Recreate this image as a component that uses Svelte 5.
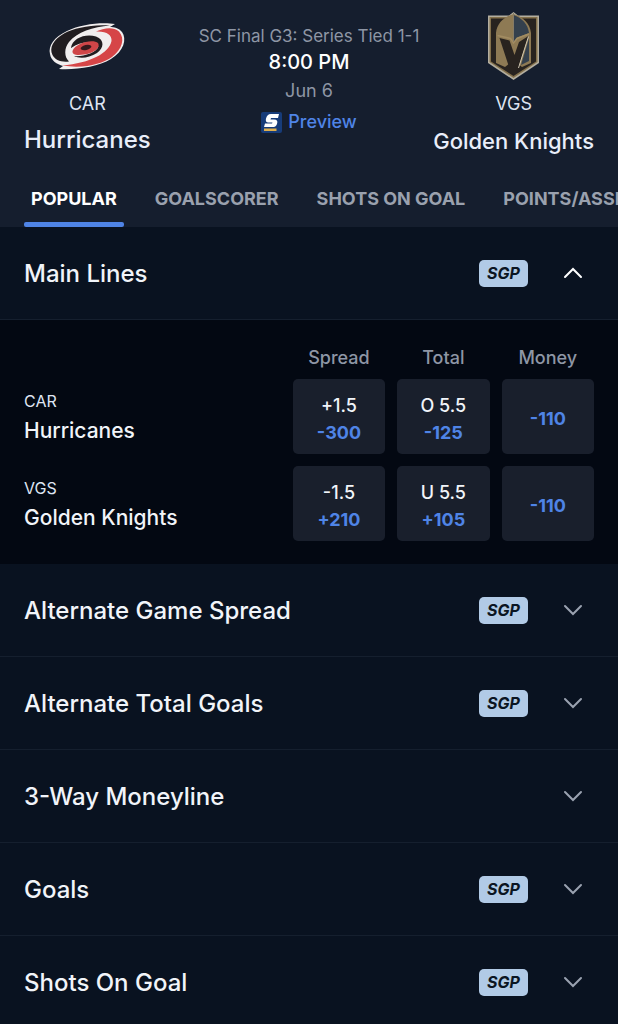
<script>
  const tabs = ['POPULAR', 'GOALSCORER', 'SHOTS ON GOAL', 'POINTS/ASSISTS'];
  let activeTab = $state('POPULAR');

  const lines = [
    {
      code: 'CAR',
      team: 'Hurricanes',
      odds: [
        { label: '+1.5', price: '-300' },
        { label: 'O 5.5', price: '-125' },
        { price: '-110' }
      ]
    },
    {
      code: 'VGS',
      team: 'Golden Knights',
      odds: [
        { label: '-1.5', price: '+210' },
        { label: 'U 5.5', price: '+105' },
        { price: '-110' }
      ]
    }
  ];

  let markets = $state([
    { name: 'Main Lines', sgp: true, open: true, lines: true },
    { name: 'Alternate Game Spread', sgp: true, open: false },
    { name: 'Alternate Total Goals', sgp: true, open: false },
    { name: '3-Way Moneyline', sgp: false, open: false },
    { name: 'Goals', sgp: true, open: false },
    { name: 'Shots On Goal', sgp: true, open: false }
  ]);
</script>

<header>
  <div class="matchup">
    <div class="team home">
      <svg class="logo" viewBox="0 0 84 72" aria-hidden="true">
        <g transform="translate(-45 -11)">
          <path d="M115 24C102 22 81 24 67 31C54 37 48 46 50 54C51 61 57 64 63 66L59 69C76 70 98 67 111 59C124 51 127 39 122 32C119 28 114 27 110 27Z" fill="#f1eeee" />
          <path d="M110 25.500C92 24 74 28 64 33.500C53 40 49 48 52.500 55C55 60 61 62.500 69 61.500C64 57 64 48 69 42C77 32 93 27 110 25.500Z" fill="#211d20" />
          <path d="M96 31.500C107 31 112 35 111.500 41C109 53 91 63 62 65.500C84 69 102 64 112 57C122 49 125.500 39 119 31.500C113 26.500 104 28 96 31.500Z" fill="#d64547" />
          <path d="M71 48C72 38 86 33 96 36.500C105 40 104 48 97 53C89 58 80 59 74 56C82 57 97 53 98.500 46C99 38 82 38 71 48Z" fill="#211d20" />
          <path d="M71 48C76 39 86 35 95 37C100 39 102 43 99 47C97 42 82 40 71 48Z" fill="#211d20" />
          <path d="M72.500 51C75 43 93 38.500 98 43C101 48 93 53.500 84 54.500C77 55.500 72 55 72.500 51Z" fill="#cf4547" />
          <ellipse cx="86" cy="47.500" rx="5.500" ry="2.500" transform="rotate(-13 86 47.500)" fill="#35191c" />
        </g>
      </svg>
      <span class="code">CAR</span>
      <strong>Hurricanes</strong>
    </div>

    <div class="details">
      <span class="series">SC Final G3: Series Tied 1-1</span>
      <time class="start">8:00 PM</time>
      <span class="date">Jun 6</span>
      <a class="preview" href="#preview">
        <svg viewBox="0 0 21 21" aria-hidden="true">
          <rect width="21" height="21" rx="2" fill="#173c79" />
          <path d="M18 2L17 6H10L9.500 7.500H13C16 7.500 17 9 16 12C15 14.500 14 15 11 15H3L4 11.500H11L11.500 10.500H8C5 10.500 4.500 9 5 6.500C6 3.500 7 2 10 2Z" fill="#fff" />
          <path d="M3 16.500H15.500V19H3Z" fill="#e0b04e" />
        </svg>
        Preview
      </a>
    </div>

    <div class="team away">
      <svg class="logo" viewBox="0 0 84 72" aria-hidden="true">
        <g transform="translate(-471 -11)">
          <path d="M487 15.500H508L512.500 12L517 15.500H538V63L512.500 80L487 63Z" fill="#b3ae9f" />
          <path d="M488.500 17H536.500V62L512.500 78L488.500 62Z" fill="#84714c" />
          <path d="M490 18.500H535V61.500L512.500 76L490 61.500Z" fill="#28231f" />
          <path d="M495 63V33C496 23 503 17 512.500 14C522 17 529 23 530 33V63L521 67L512.500 60L504 67Z" fill="#8e7a54" />
          <path d="M512.500 15C521 18 527 24 528 33L516 37.500L512.500 43Z" fill="#34404d" />
          <path d="M528 38V61L520 65Z" fill="#34404d" />
          <path d="M498.500 38L508.500 40.500L513.500 55L518 42L527.500 36L516.500 70H509Z" fill="#28231f" />
          <path d="M527.500 36.500L517.500 68" fill="none" stroke="#cfc6b1" />
          <path d="M496.500 35.500L509.500 38.500L512.500 43L516 38.500L528 34" fill="none" stroke="#a28c62" stroke-width="1.500" />
          <path d="M512.500 13V42" stroke="#857b66" />
        </g>
      </svg>
      <span class="code">VGS</span>
      <strong>Golden Knights</strong>
    </div>
  </div>

  <nav>
    {#each tabs as tab}
      <button class="tab" class:active={activeTab === tab} onclick={() => (activeTab = tab)}>{tab}</button>
    {/each}
  </nav>
</header>

<main>
  {#each markets as market}
    <section>
      <h2>
        <button class="market" aria-expanded={market.open} onclick={() => (market.open = !market.open)}>
          <span class="name">{market.name}</span>
          {#if market.sgp}<span class="sgp">SGP</span>{/if}
          <svg class="chevron" class:open={market.open} viewBox="0 0 20 12" aria-hidden="true">
            <path d="M2 2L10 10L18 2" />
          </svg>
        </button>
      </h2>
      {#if market.open && market.lines}
        <table>
          <thead>
            <tr>
              <td></td>
              <th scope="col">Spread</th>
              <th scope="col">Total</th>
              <th scope="col">Money</th>
            </tr>
          </thead>
          <tbody>
            {#each lines as line}
              <tr>
                <th scope="row">
                  <span class="short">{line.code}</span>
                  <span class="full">{line.team}</span>
                </th>
                {#each line.odds as odd}
                  <td>
                    <button class="odd">
                      {#if odd.label}<span>{odd.label}</span>{/if}
                      <b>{odd.price}</b>
                    </button>
                  </td>
                {/each}
              </tr>
            {/each}
          </tbody>
        </table>
      {/if}
    </section>
  {/each}
</main>

<style>
  :global(body) {
    margin: 0;
    background: #091220;
    color: #f1f4f9;
    font-family: Inter, "Liberation Sans", sans-serif;
    overflow-x: hidden;
  }

  button {
    margin: 0;
    padding: 0;
    border: 0;
    background: none;
    color: inherit;
    font: inherit;
    cursor: pointer;
  }

  header {
    background: #151e2e;
  }

  .matchup {
    display: grid;
    grid-template-columns: 1fr auto 1fr;
    padding: 11px 24px 0;
  }

  .team {
    display: flex;
    flex-direction: column;
    align-items: center;
    justify-self: start;
  }

  .team.away {
    justify-self: end;
  }

  .logo {
    width: 84px;
    height: 72px;
  }

  .code {
    margin-top: 9px;
    font-size: 18px;
    line-height: 24px;
    color: #dfe5f2;
  }

  .team strong {
    margin-top: 8px;
    font-size: 24px;
    line-height: 32px;
    font-weight: 500;
    color: #e9eefa;
  }

  .team.away strong {
    font-size: 22px;
    line-height: 34px;
  }

  .details {
    display: flex;
    flex-direction: column;
    align-items: center;
    padding-top: 13px;
  }

  .series {
    font-size: 17px;
    line-height: 24px;
    color: #8e96a5;
  }

  .start {
    font-size: 20px;
    line-height: 28px;
    font-weight: 500;
    color: #fff;
  }

  .date {
    font-size: 18px;
    line-height: 30px;
    color: #8e96a5;
  }

  .preview {
    display: flex;
    align-items: center;
    gap: 6px;
    font-size: 18px;
    line-height: 32px;
    font-weight: 500;
    color: #4f84e6;
    text-decoration: none;
  }

  .preview svg {
    width: 21px;
    height: 21px;
  }

  nav {
    display: flex;
    gap: 24px;
    margin-top: 13px;
    padding: 0 24px;
    overflow: hidden;
  }

  .tab {
    flex: none;
    padding: 16px 7px 11px;
    border-bottom: 5px solid transparent;
    font-size: 18px;
    line-height: 24px;
    font-weight: 700;
    color: #9aa1ae;
    position: relative;
  }

  .tab.active {
    color: #fff;
  }

  .tab.active::after {
    content: "";
    position: absolute;
    left: 0;
    right: 0;
    bottom: -5px;
    height: 5px;
    border-radius: 2px;
    background: #4f84e6;
  }

  h2 {
    margin: 0;
    font: inherit;
  }

  .market {
    display: flex;
    align-items: center;
    box-sizing: border-box;
    width: 100%;
    height: 93px;
    padding: 0 35px 0 24px;
    border-bottom: 1px solid #151f2e;
    text-align: left;
  }

  .name {
    flex: 1;
    padding-top: 2px;
    font-size: 24px;
    line-height: 32px;
    font-weight: 500;
  }

  .sgp {
    width: 49px;
    border-radius: 5px;
    background: #b1cae6;
    color: #0b1522;
    font-size: 16px;
    line-height: 27px;
    font-weight: 700;
    font-style: italic;
    text-align: center;
  }

  .chevron {
    width: 20px;
    height: 12px;
    margin-left: 35px;
    fill: none;
    stroke: #9aa2b0;
    stroke-width: 2;
    stroke-linecap: round;
  }

  .chevron.open {
    stroke: #fff;
    transform: scaleY(-1);
  }

  table {
    display: block;
    padding: 26px 24px 23px;
    background: #030812;
  }

  thead,
  tbody {
    display: block;
  }

  tr {
    display: grid;
    grid-template-columns: 25fr 9fr 9fr 9fr;
    column-gap: 12px;
    align-items: center;
  }

  tbody tr {
    margin-top: 12px;
  }

  th,
  td {
    padding: 0;
    font-weight: 400;
  }

  thead th {
    font-size: 18px;
    line-height: 24px;
    font-weight: 500;
    color: #8e96a5;
  }

  thead + tbody tr:first-child {
    margin-top: 9px;
  }

  tbody th {
    text-align: left;
  }

  .short,
  .full {
    display: block;
  }

  .short {
    font-size: 16px;
    line-height: 26px;
    color: #dfe5f2;
  }

  .full {
    margin-top: 2px;
    font-size: 21px;
    line-height: 30px;
    font-weight: 500;
  }

  .odd {
    display: flex;
    flex-direction: column;
    align-items: center;
    justify-content: center;
    box-sizing: border-box;
    width: 100%;
    height: 75px;
    padding-top: 4px;
    border-radius: 5px;
    background: #191f2c;
    font-size: 18px;
    line-height: 27px;
    font-weight: 500;
  }

  .odd b {
    font-weight: 700;
    color: #4f84e6;
  }
</style>
